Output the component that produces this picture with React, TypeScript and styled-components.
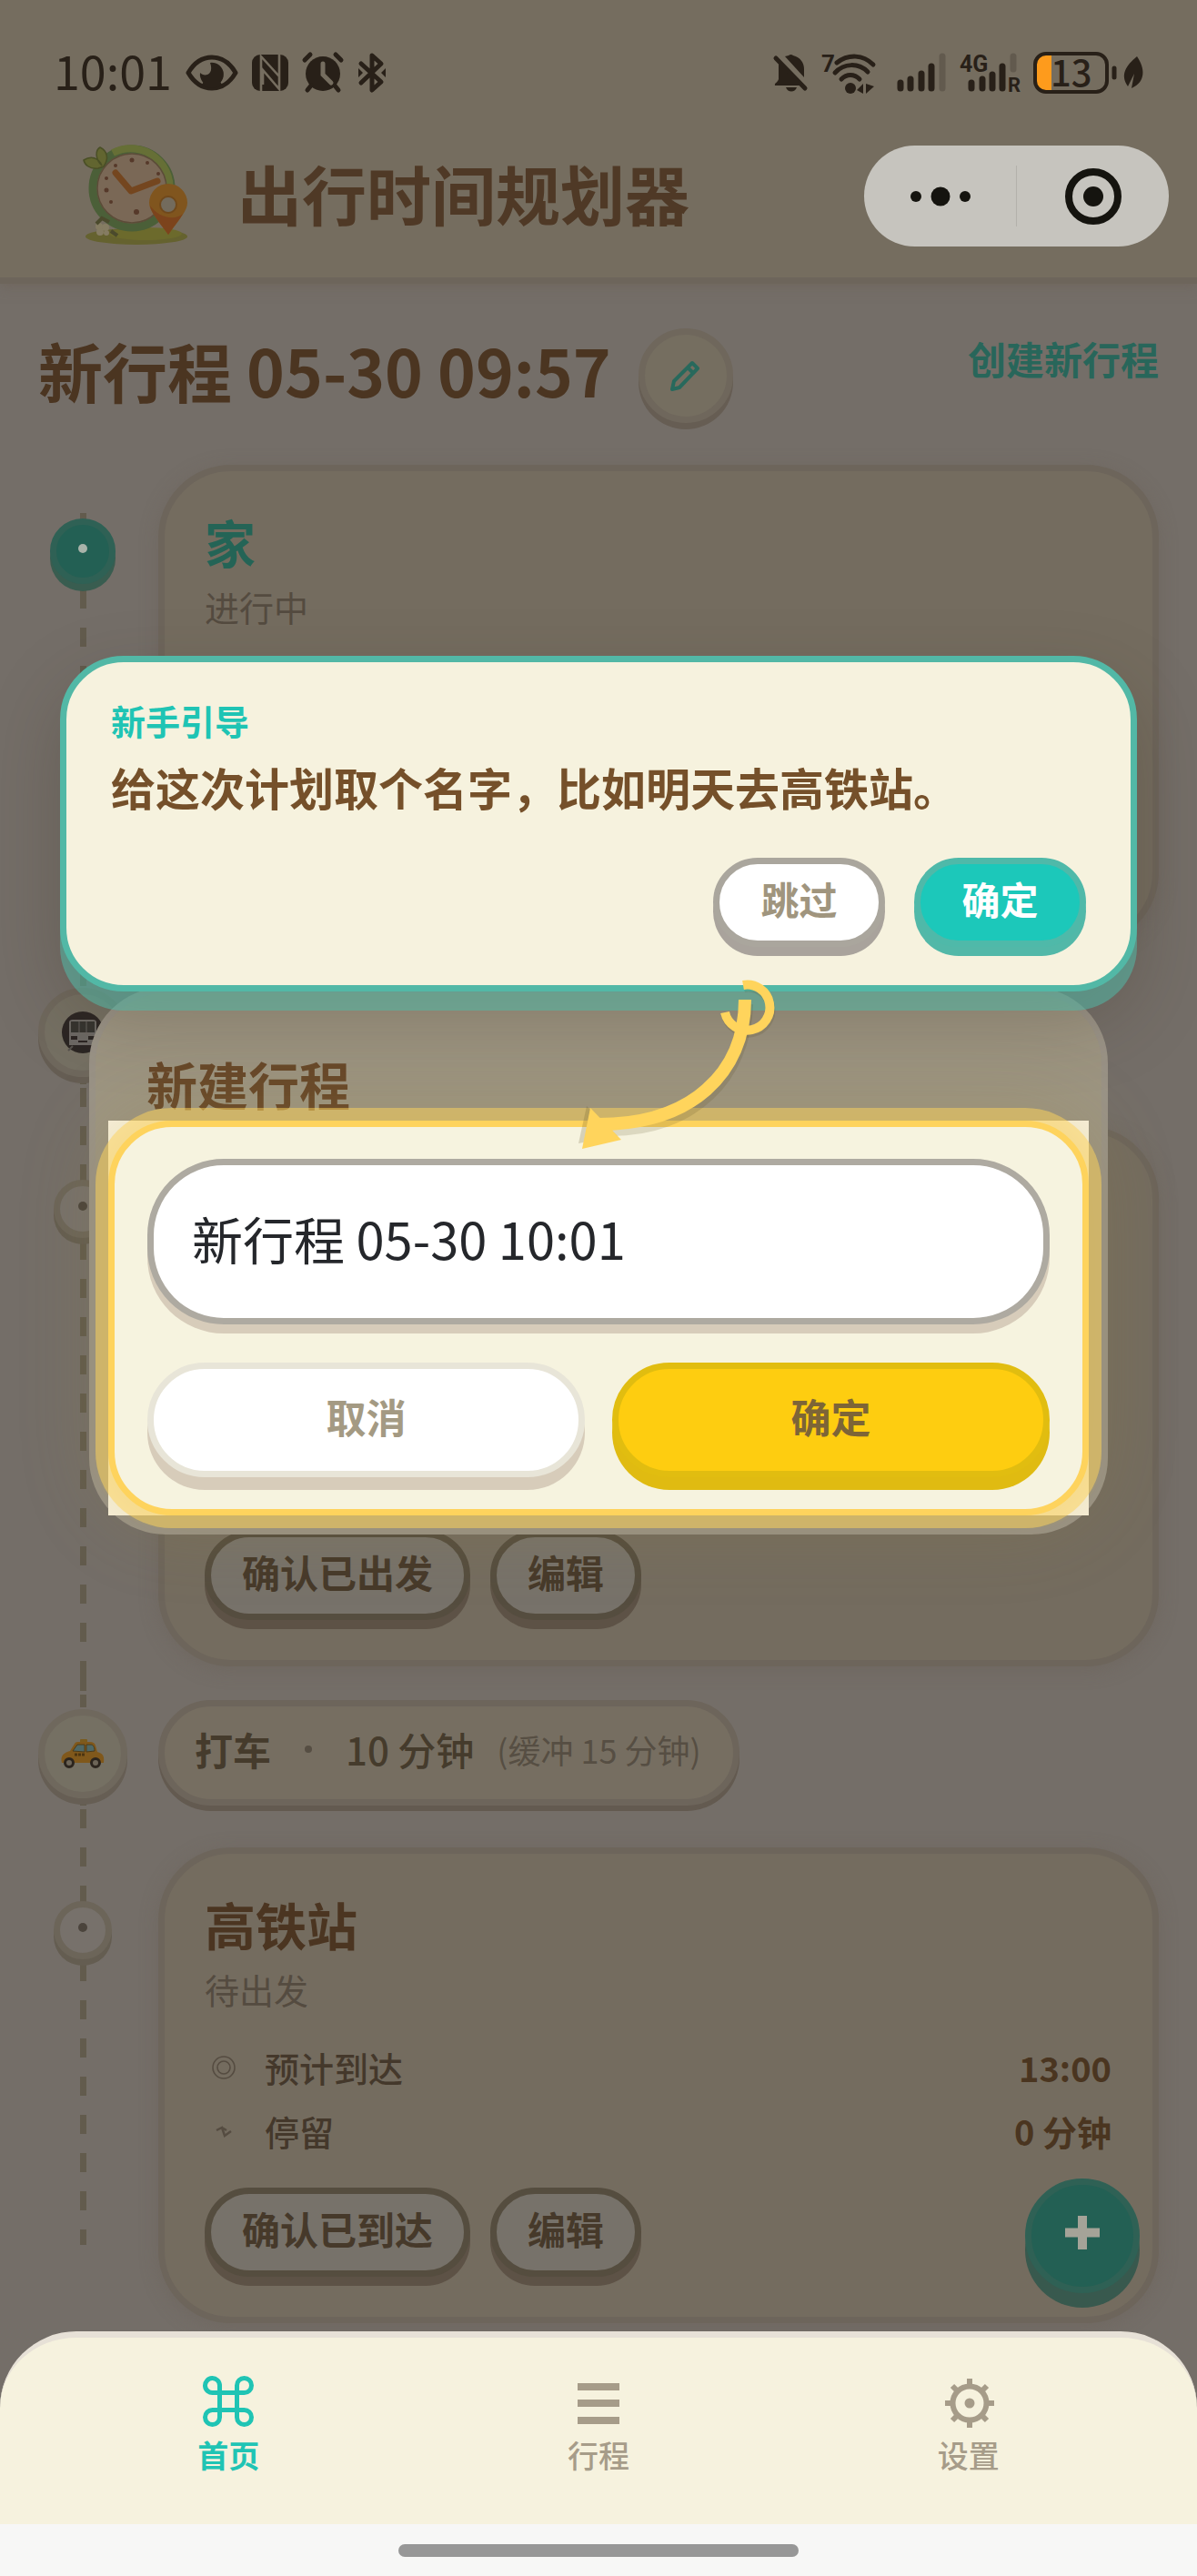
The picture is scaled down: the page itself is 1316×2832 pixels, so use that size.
import React, { useState } from 'react';
import styled, { createGlobalStyle, css } from 'styled-components';

const ink = '#282018';

const GlobalStyle = createGlobalStyle`
  * { box-sizing: border-box; }
  body {
    margin: 0;
    background: #746e68;
    font-family: 'Noto Sans CJK SC', 'Noto Sans', sans-serif;
    font-size: 38px;
  }
  h1, h2, h3, p, dl, dd, dt { margin: 0; font-weight: inherit; font-size: inherit; }
  button, input { font: inherit; margin: 0; padding: 0; border: 0; }
  svg { display: block; flex: none; overflow: visible; }
`;

const Screen = styled.div`
  position: relative;
  display: flex;
  flex-direction: column;
  min-height: 100vh;
  overflow: hidden;
  background: #746e68;
`;

/* ---------- header ---------- */

const Header = styled.header`
  border-bottom: 7px solid #6d655b;
  background: #756d5f;
  box-shadow: 0 4px 12px rgba(110, 98, 88, 0.6);
`;

const StatusBar = styled.div`
  display: flex;
  align-items: center;
  justify-content: space-between;
  height: 160px;
  padding: 0 59px;
  color: ${ink};
`;

const StatusGroup = styled.div<{ $gap: number }>`
  display: flex;
  align-items: center;
  gap: ${p => p.$gap}px;
`;

const Clock = styled.span`
  padding-bottom: 6px;
  font-size: 52px;
  line-height: 60px;
`;

const TitleBar = styled.div`
  display: flex;
  align-items: center;
  height: 145px;
  padding: 0 31px 34px 88px;
`;

const AppName = styled.h1`
  flex: 1;
  padding: 0 0 10px 53px;
  color: #4f3926;
  font-size: 71px;
  font-weight: 700;
  line-height: 96px;
`;

const Capsule = styled.div`
  display: flex;
  width: 335px;
  height: 111px;
  border-radius: 56px;
  background: #c6c4be;
`;

const CapsuleButton = styled.button`
  display: flex;
  flex: 1;
  align-items: center;
  justify-content: center;
  background: none;
`;

const CapsuleRule = styled.span`
  align-self: center;
  width: 1px;
  height: 67px;
  background: #b3b1ab;
`;

/* ---------- plan ---------- */

const Main = styled.main`
  flex: 1;
  padding: 49px 42px 0;
`;

const PlanHead = styled.div`
  display: flex;
  align-items: flex-start;
  height: 108px;
`;

const PlanName = styled.h2`
  color: #4b3521;
  font-size: 71px;
  font-weight: 700;
  line-height: 90px;
`;

const EditButton = styled.button`
  display: flex;
  align-items: center;
  justify-content: center;
  width: 104px;
  height: 104px;
  margin-left: 30px;
  border: 7px solid #6f675c;
  border-radius: 50%;
  background: #756e60;
  box-shadow: 0 7px 0 #665d53;
`;

const CreateLink = styled.a`
  margin-left: auto;
  color: #28665a;
  font-size: 42px;
  font-weight: 700;
  line-height: 66px;
  text-decoration: none;
`;

const Row = styled.section`
  display: flex;
  gap: 34px;
`;

const Rail = styled.div<{ $from?: number; $length?: string; $dense?: boolean }>`
  display: flex;
  flex: none;
  justify-content: center;
  width: 98px;
  background-image: ${p =>
    p.$dense
      ? 'repeating-linear-gradient(#625b4d 0 14px, transparent 14px 18px)'
      : 'repeating-linear-gradient(#625b4d 0 21px, transparent 21px 42px)'};
  background-repeat: no-repeat;
  background-position: 46px ${p => p.$from ?? 0}px;
  background-size: 7px ${p => p.$length ?? '100%'};
`;

const StopDot = styled.span<{ $active?: boolean }>`
  display: flex;
  align-items: center;
  justify-content: center;
  width: 64px;
  height: 64px;
  margin-top: 101px;
  border: 7px solid #6c6559;
  border-radius: 50%;
  background: #77716b;
  box-shadow: 0 7px 0 #645d51;
  &::after {
    width: 10px;
    height: 10px;
    margin-bottom: 7px;
    border-radius: 50%;
    background: #4b443c;
    content: '';
  }
  ${p =>
    p.$active &&
    css`
      width: 72px;
      height: 72px;
      border-color: #2f6155;
      background: #236054;
      box-shadow: 0 8px 0 #395d50;
      &::after { background: #a9b3aa; }
    `}
`;

const RideDot = styled.span`
  display: flex;
  align-items: center;
  justify-content: center;
  width: 98px;
  height: 98px;
  margin-top: 34px;
  border: 7px solid #6f685d;
  border-radius: 50%;
  background: #757063;
  box-shadow: 0 7px 0 #665e54;
`;

const StopBody = styled.div`
  flex: 1;
  padding: 42px 0 13px;
  ${Row}:last-child & { padding-bottom: 9px; }
`;

const Card = styled.article<{ $min?: number }>`
  display: flex;
  flex-direction: column;
  min-height: ${p => p.$min ?? 0}px;
  padding: 42px 44px 44px;
  border: 7px solid #6d655b;
  border-radius: 80px;
  background: #746c5f;
  box-shadow: 0 4px 20px rgba(105, 95, 86, 0.4);
`;

const StopName = styled.h3<{ $active?: boolean }>`
  color: ${p => (p.$active ? '#246456' : '#4b3521')};
  font-size: 56px;
  font-weight: 700;
  line-height: 70px;
`;

const StopState = styled.p`
  margin-top: 11px;
  color: #544b40;
  line-height: 52px;
`;

const Facts = styled.dl`
  display: grid;
  gap: 18px;
  margin-top: 34px;
`;

const Fact = styled.div`
  display: flex;
  align-items: center;
  padding: 0 1px 0 8px;
  line-height: 52px;
`;

const FactLabel = styled.dt`
  flex: 1;
  padding-left: 32px;
  color: #44382b;
  font-weight: 500;
`;

const FactValue = styled.dd`
  color: #4a3520;
  font-weight: 700;
`;

const CardActions = styled.div`
  display: flex;
  gap: 22px;
  margin-top: auto;
  ${Facts} + & { margin-top: 36px; }
`;

const CardButton = styled.button`
  height: 98px;
  padding: 0 34px 9px;
  border: 7px solid #554d3f;
  border-radius: 49px;
  background: #77726a;
  box-shadow: 0 10px 0 #5d5246;
  color: #46392a;
  font-size: 42px;
  font-weight: 700;
`;

const RideBody = styled.div`
  flex: 1;
  padding: 24px 0 4px;
`;

const RideSlot = styled.div`
  height: 116px;
`;

const Ride = styled.div`
  display: inline-flex;
  align-items: center;
  height: 116px;
  padding: 0 35px 9px 33px;
  border: 7px solid #6d655b;
  border-radius: 58px;
  background: #766e61;
  box-shadow: 0 6px 0 #635a50;
  color: #453b2c;
  font-size: 42px;
`;

const RideMode = styled.span`
  font-weight: 700;
`;

const RideSep = styled.span`
  width: 8px;
  height: 8px;
  margin: 0 37px;
  border-radius: 50%;
  background: #564e43;
`;

const RideTime = styled.span`
  font-weight: 500;
`;

const RideBuffer = styled.span`
  margin-left: 25px;
  color: #564e43;
  font-size: 36px;
`;

const AddButton = styled.button`
  position: absolute;
  right: 63px;
  bottom: 311px;
  display: flex;
  align-items: center;
  justify-content: center;
  width: 126px;
  height: 126px;
  border: 7px solid #2f6155;
  border-radius: 50%;
  background: #236054;
  box-shadow: 0 16px 0 #38594e;
`;

/* ---------- guide and dialog ---------- */

const Overlay = styled.div`
  position: absolute;
  inset: 0;
  padding: 721px 66px 0;
  pointer-events: none;
  & > * { pointer-events: auto; }
`;

const Guide = styled.aside`
  position: relative;
  z-index: 1;
  display: flex;
  flex-direction: column;
  padding: 40px 49px 42px;
  border: 7px solid #52b8a6;
  border-radius: 70px;
  background: #f6f2de;
  box-shadow: 0 21px 0 rgba(82, 184, 166, 0.55), 0 32px 80px rgba(60, 50, 35, 0.26);
`;

const GuideTag = styled.p`
  color: #1fc4b4;
  font-weight: 700;
  line-height: 48px;
`;

const GuideText = styled.p`
  margin-top: 12px;
  color: #75502a;
  font-size: 49px;
  font-weight: 700;
  line-height: 74px;
`;

const GuideActions = styled.div`
  display: flex;
  justify-content: flex-end;
  gap: 32px;
  margin-top: 41px;
`;

const GuideButton = styled.button<{ $primary?: boolean }>`
  width: 189px;
  height: 98px;
  padding-bottom: 9px;
  border: 7px solid ${p => (p.$primary ? '#4fb9a9' : '#aaa69d')};
  border-radius: 49px;
  background: ${p => (p.$primary ? '#1cc8ba' : '#ffffff')};
  box-shadow: 0 10px 0 ${p => (p.$primary ? '#52b8a8' : '#a9a39c')};
  color: ${p => (p.$primary ? '#ffffff' : '#a0957e')};
  font-size: 42px;
  font-weight: 700;
`;

const Dialog = styled.form`
  margin: -5px 32px 0;
  padding: 14px;
  border: 7px solid #9a9387;
  border-radius: 84px;
  background: #9d9582;
`;

const DialogTitle = styled.h2`
  padding: 50px 42px 6px;
  color: #68482a;
  font-size: 56px;
  font-weight: 700;
  line-height: 70px;
`;

const Spotlight = styled.div`
  display: grid;
  background: #fbf3dc;
`;

const SpotlightFrame = styled.div`
  display: flex;
  flex-direction: column;
  gap: 42px;
  padding: 35px 36px;
  border: 7px solid #fed35d;
  border-radius: 70px;
  background: #f6f3df;
  box-shadow: 0 0 0 14px rgba(253, 211, 92, 0.52), 0 0 84px 14px rgba(150, 130, 60, 0.22);
`;

const NameInput = styled.input`
  width: 100%;
  height: 182px;
  padding: 0 42px 9px;
  border: 7px solid #aeaaa1;
  border-radius: 84px;
  outline: none;
  background: #ffffff;
  box-shadow: 0 10px 0 #d7ccba;
  color: #25272b;
  font-size: 56px;
`;

const DialogActions = styled.div`
  display: flex;
  gap: 30px;
`;

const DialogButton = styled.button<{ $primary?: boolean }>`
  flex: 1;
  height: 126px;
  padding-bottom: 9px;
  border: 7px solid ${p => (p.$primary ? '#e1bd10' : '#e8e5d8')};
  border-radius: 63px;
  background: ${p => (p.$primary ? '#fecd10' : '#ffffff')};
  box-shadow: 0 14px 0 ${p => (p.$primary ? '#e0bb11' : '#d7ccba')};
  color: ${p => (p.$primary ? '#7d6537' : '#a49a83')};
  font-size: 44px;
  font-weight: 700;
`;

const Pointer = styled.svg`
  position: absolute;
  z-index: 2;
  top: 1060px;
  left: calc(50% - 58px);
  pointer-events: none;
`;

/* ---------- tab bar ---------- */

const TabBar = styled.nav`
  display: flex;
  padding: 42px 48px 55px;
  border-top: 7px solid #e7e1d7;
  border-radius: 84px 84px 0 0;
  background: #f6f2de;
`;

const Tab = styled.a<{ $active?: boolean }>`
  display: flex;
  flex: 1;
  flex-direction: column;
  align-items: center;
  gap: 10px;
  color: ${p => (p.$active ? '#1fc4b4' : '#a69c89')};
  font-size: 34px;
  font-weight: ${p => (p.$active ? 700 : 500)};
  line-height: 42px;
  text-decoration: none;
`;

const HomeStrip = styled.div`
  display: flex;
  align-items: center;
  justify-content: center;
  height: 57px;
  background: #f7f7f6;
  &::after {
    width: 33.4%;
    height: 14px;
    border-radius: 7px;
    background: #979797;
    content: '';
  }
`;

/* ---------- drawings ---------- */

const EyeIcon = () => (
  <svg width="58" height="40" viewBox="0 0 58 40" fill="none">
    <path d="M3 20C10 8 19 3 29 3s19 5 26 17c-7 12-16 17-26 17S10 32 3 20Z" stroke={ink} strokeWidth="5" strokeLinejoin="round" />
    <path d="M27 9a13 13 0 1 1-11 11c4 5 16 3 11-11Z" fill={ink} />
    <path d="M18 33c7 5 15 5 22 0l-3-5H21Z" fill={ink} />
  </svg>
);

const NfcIcon = () => (
  <svg width="40" height="40" viewBox="0 0 40 40">
    <rect width="40" height="40" rx="9" fill={ink} />
    <path d="M10 40V2l20 22V9M30 0v38L12 17v16" stroke="#756d5f" strokeWidth="2.6" fill="none" />
  </svg>
);

const AlarmIcon = () => (
  <svg width="46" height="44" viewBox="0 0 46 44" fill="none" stroke={ink} strokeLinecap="round">
    <circle cx="23" cy="23" r="19" fill={ink} stroke="none" />
    <path d="M3 8l6-6M43 8l-6-6M10 36l-4 5M36 36l4 5" strokeWidth="5" />
    <path d="M23 12v12l9 9" stroke="#756d5f" strokeWidth="5" />
  </svg>
);

const BluetoothIcon = () => (
  <svg width="32" height="44" viewBox="0 0 32 44" fill="none" stroke={ink} strokeWidth="5" strokeLinejoin="round" strokeLinecap="round">
    <path d="M4 12l22 20-10 9V3l10 9L4 33" />
    <path d="M1 17v10l5-5ZM31 17v10l-5-5Z" fill={ink} stroke="none" />
  </svg>
);

const MutedBellIcon = () => (
  <svg width="38" height="44" viewBox="0 0 38 44">
    <path d="M13 4l4-1a4 4 0 0 1 5 0c8 2 12 8 12 15v9ZM6 12l24 24H2c-1-3 3-3 4-7Z" fill={ink} />
    <path d="M3 6l32 33" stroke={ink} strokeWidth="5" strokeLinecap="round" />
    <path d="M14 38h12c-2 6-10 6-12 0Z" fill={ink} />
  </svg>
);

const WifiIcon = () => (
  <svg width="68" height="48" viewBox="0 0 68 48" fill="none" stroke={ink} strokeWidth="5" strokeLinecap="round">
    <text x="0" y="23" fontSize="26" fontWeight="700" fontFamily="Roboto, sans-serif" fill={ink} stroke="none">7</text>
    <path d="M17 13c13-10 29-9 40 2M15 24c10-11 26-11 36-1M22 31c6-6 14-6 20 0" />
    <circle cx="32" cy="41" r="6" fill={ink} stroke="none" />
    <path d="M46 36v11l-7-4ZM49 36v11l9-8Z" fill={ink} stroke="none" />
  </svg>
);

const SignalIcon = () => (
  <svg width="54" height="44" viewBox="0 0 54 44" stroke={ink} strokeWidth="7" strokeLinecap="round">
    <path d="M4 33v6M15 29v10M27 23v16M38 15v24" />
    <path d="M50 4v35" stroke="#625a4e" />
  </svg>
);

const CellularIcon = () => (
  <svg width="66" height="44" viewBox="0 0 66 44" stroke={ink} strokeWidth="7" strokeLinecap="round">
    <path d="M13 33v6M25 29v10M36 24v15M47 15v24" />
    <path d="M59 4v14" stroke="#625a4e" />
    <g fill={ink} stroke="none" fontFamily="Roboto, sans-serif" fontWeight="700">
      <text x="0" y="21" fontSize="25">4G</text>
      <text x="53" y="43" fontSize="22">R</text>
    </g>
  </svg>
);

const BatteryIcon = () => (
  <svg width="92" height="46" viewBox="0 0 92 46">
    <path d="M12 3h8v40h-8a9 9 0 0 1-9-9V12a9 9 0 0 1 9-9Z" fill="#fe9b1c" />
    <rect x="2" y="2" width="79" height="42" rx="12" fill="none" stroke={ink} strokeWidth="4" />
    <path d="M89 18v10" stroke={ink} strokeWidth="5" strokeLinecap="round" />
    <text x="19" y="38" fontSize="40" fontWeight="500" fontFamily="'Noto Sans CJK SC', sans-serif" fill={ink}>13</text>
  </svg>
);

const LeafIcon = () => (
  <svg width="22" height="36" viewBox="0 0 22 36">
    <path d="M15 0c9 13 10 28-6 35l3-16-7 14C-4 20 3 10 15 0Z" fill={ink} />
  </svg>
);

const ClockLogo = () => (
  <svg width="120" height="112" viewBox="0 0 120 112" fill="none">
    <ellipse cx="62" cy="100" rx="56" ry="9" fill="#65622f" />
    <ellipse cx="72" cy="97" rx="40" ry="7" fill="#6c6a2c" />
    <circle cx="57" cy="47" r="43" fill="#7a6856" stroke="#4b5f38" strokeWidth="9" />
    <path d="M36 8a43 43 0 0 1 61 50" stroke="#666f36" strokeWidth="8" />
    <circle cx="57" cy="47" r="38" stroke="#5c4c38" strokeWidth="1.5" />
    <path d="M20 25C10 26 5 21 4 16c8-5 16-3 20 6C16 14 17 5 22 2c8 4 10 12 4 21Z" fill="#626530" stroke="#4a4f26" strokeWidth="1.5" />
    <g fill="#56392a">
      <circle cx="57" cy="16" r="2.5" />
      <circle cx="74" cy="19" r="2" />
      <circle cx="86" cy="31" r="2" />
      <circle cx="39" cy="22" r="2" />
      <circle cx="29" cy="36" r="2" />
      <circle cx="29" cy="49" r="2.5" />
      <circle cx="34" cy="62" r="2" />
      <circle cx="62" cy="73" r="3" />
    </g>
    <path d="M39 30l17 20 29-11" stroke="#74461f" strokeWidth="7" strokeLinecap="round" strokeLinejoin="round" />
    <path d="M97 98C85 81 76 72 76 63a21 21 0 0 1 42 0c0 9-9 18-21 35Z" fill="#80551e" />
    <path d="M97 98C87 84 78 74 77 66c8 12 26 18 36 9-4 7-10 14-16 23Z" fill="#7c431c" />
    <circle cx="97" cy="65" r="9" fill="#736b5d" stroke="#70491c" strokeWidth="2" />
    <g fill="#857c62">
      <circle cx="21" cy="89" r="4" />
      <circle cx="28" cy="90" r="4" />
      <circle cx="22" cy="95" r="4" />
      <circle cx="29" cy="96" r="3" />
    </g>
    <path d="M18 86l6-6 8 4M34 94l7 5" stroke="#4b4a2c" strokeWidth="4" />
  </svg>
);

const DotsIcon = () => (
  <svg width="66" height="22" viewBox="0 0 66 22" fill="#15140f">
    <circle cx="6" cy="11" r="6" />
    <circle cx="33" cy="11" r="10.5" />
    <circle cx="60" cy="11" r="6" />
  </svg>
);

const TargetIcon = () => (
  <svg width="62" height="62" viewBox="0 0 62 62">
    <circle cx="31" cy="31" r="27" fill="none" stroke="#15140f" strokeWidth="8" />
    <circle cx="31" cy="31" r="11" fill="#15140f" />
  </svg>
);

const PencilIcon = () => (
  <svg width="36" height="36" viewBox="0 0 36 36" fill="none" stroke="#28695c" strokeWidth="4" strokeLinejoin="round">
    <path d="M3 33l2-9L25 4l6 6-20 21ZM20 9l6 6" />
  </svg>
);

const BusIcon = () => (
  <svg width="50" height="46" viewBox="0 0 50 46">
    <circle cx="25" cy="23" r="23" fill="#2b2523" />
    <path d="M10 12q0-3 4-3h22q4 0 4 3v25H10Z" fill="#6c6864" />
    <path d="M12 11h26v12H12Z" fill="#35332f" />
    <path d="M21 11v12M29 11v12" stroke="#4d4a46" strokeWidth="2" />
    <path d="M12 27h7v4h-7ZM31 27h7v4h-7ZM20 32h10v2H20Z" fill="#2b2523" />
    <path d="M14 38l-5 5M36 38l5 5" stroke="#55514d" strokeWidth="2" />
  </svg>
);

const TaxiIcon = () => (
  <svg width="50" height="34" viewBox="0 0 50 34">
    <rect x="22" y="1" width="8" height="4" rx="1" fill="#7a5b1e" />
    <path d="M2 27c-2-8 2-11 9-13l5-8c1-2 3-2 5-2h12c3 0 5 1 6 4l2 7c6 2 8 4 7 12Z" fill="#80581b" />
    <path d="M14 14l5-7h8v8ZM29 7h5c2 0 4 2 4 7l-9 1Z" fill="#4f6866" stroke="#4c3a18" />
    <path d="M16 18h12" stroke="#4c3410" strokeWidth="3" strokeDasharray="3 1" />
    <g fill="#6d6558" stroke="#2b241d" strokeWidth="3">
      <circle cx="10" cy="27" r="4.5" />
      <circle cx="39" cy="27" r="4.5" />
    </g>
  </svg>
);

const RingIcon = () => (
  <svg width="26" height="26" viewBox="0 0 26 26" fill="none" stroke="#554c41" strokeWidth="1.6">
    <circle cx="13" cy="13" r="12" />
    <circle cx="13" cy="13" r="7" />
  </svg>
);

const BoltIcon = () => (
  <svg width="26" height="26" viewBox="0 0 26 26" fill="none" stroke="#554c41" strokeWidth="2.5">
    <path d="M5 12l6-3 3 9 7-5M11 9l5 3" />
  </svg>
);

const PlusIcon = () => (
  <svg width="38" height="44" viewBox="0 0 38 44" stroke="#a5a398" strokeWidth="10">
    <path d="M19 0v37M0 18.500h38" />
  </svg>
);

const CommandIcon = () => (
  <svg width="56" height="56" viewBox="0 0 56 56" fill="none" stroke="currentColor" strokeWidth="5">
    <path d="M18.500 37.500v-28M18.500 37.500h19v-19h-19M18.500 18.500h-7a8 8 0 1 1 7-8v8M37.500 18.500v-8a8 8 0 1 1 8 8h-8M37.500 37.500h8a8 8 0 1 1-8 8v-8M18.500 37.500v8a8 8 0 1 1-8-8h8" />
  </svg>
);

const ListIcon = () => (
  <svg width="56" height="56" viewBox="0 0 56 56" stroke="currentColor" strokeWidth="8">
    <path d="M5 12h46M5 30h46M5 49h46" />
  </svg>
);

const GearIcon = () => (
  <svg width="56" height="56" viewBox="0 0 56 56" fill="none" stroke="currentColor">
    <circle cx="29" cy="30" r="18.500" strokeWidth="6" />
    <circle cx="29" cy="30" r="5.500" fill="currentColor" stroke="none" />
    <path d="M29 3v8M29 49v8M2 30h8M48 30h8M10 11l6 6M42 43l6 6M10 49l6-6M42 17l6-6" strokeWidth="6" />
  </svg>
);

const GuideArrow = () => (
  <Pointer width="280" height="220" viewBox="0 0 280 220" fill="none" aria-hidden="true">
    <g stroke="#5a4a20" strokeOpacity="0.16">
      <path d="M221 44C219 126 160 182 72 182" strokeWidth="14" />
      <path d="M218 26a25 25 0 1 1-20 30" strokeWidth="10" />
    </g>
    <path d="M45 156l-9 41 43-8Z" fill="#5a4a20" fillOpacity="0.2" />
    <g stroke="#ffd45c">
      <path d="M219 39C219 120 160 176 58 176" strokeWidth="14" />
      <path d="M217 23a25 25 0 1 1-20 30" strokeWidth="10" />
    </g>
    <path d="M49 158l-9 45 43-10Z" fill="#ffd45c" />
  </Pointer>
);

/* ---------- app ---------- */

export default function App() {
  const [name, setName] = useState('新行程 05-30 10:01');

  return (
    <Screen>
      <GlobalStyle />
      <Header>
        <StatusBar>
          <StatusGroup $gap={15}>
            <Clock>10:01</Clock>
            <EyeIcon />
            <NfcIcon />
            <AlarmIcon />
            <BluetoothIcon />
          </StatusGroup>
          <StatusGroup $gap={15}>
            <MutedBellIcon />
            <WifiIcon />
            <SignalIcon />
            <CellularIcon />
            <StatusGroup $gap={7}>
              <BatteryIcon />
              <LeafIcon />
            </StatusGroup>
          </StatusGroup>
        </StatusBar>
        <TitleBar>
          <ClockLogo />
          <AppName>出行时间规划器</AppName>
          <Capsule>
            <CapsuleButton type="button" aria-label="更多"><DotsIcon /></CapsuleButton>
            <CapsuleRule />
            <CapsuleButton type="button" aria-label="关闭"><TargetIcon /></CapsuleButton>
          </Capsule>
        </TitleBar>
      </Header>

      <Main>
        <PlanHead>
          <PlanName>新行程 05-30 09:57</PlanName>
          <EditButton type="button" aria-label="编辑名称"><PencilIcon /></EditButton>
          <CreateLink href="#new">创建新行程</CreateLink>
        </PlanHead>

        <div>
          <Row>
            <Rail $from={95}><StopDot $active /></Rail>
            <StopBody>
              <Card $min={528}>
                <StopName $active>家</StopName>
                <StopState>进行中</StopState>
              </Card>
            </StopBody>
          </Row>
          <Row>
            <Rail $dense><RideDot><BusIcon /></RideDot></Rail>
            <RideBody><RideSlot /></RideBody>
          </Row>
          <Row>
            <Rail><StopDot /></Rail>
            <StopBody>
              <Card $min={594}>
                <CardActions>
                  <CardButton type="button">确认已出发</CardButton>
                  <CardButton type="button">编辑</CardButton>
                </CardActions>
              </Card>
            </StopBody>
          </Row>
          <Row>
            <Rail $dense><RideDot><TaxiIcon /></RideDot></Rail>
            <RideBody>
              <Ride>
                <RideMode>打车</RideMode>
                <RideSep />
                <RideTime>10 分钟</RideTime>
                <RideBuffer>(缓冲 15 分钟)</RideBuffer>
              </Ride>
            </RideBody>
          </Row>
          <Row>
            <Rail $length="479px"><StopDot /></Rail>
            <StopBody>
              <Card>
                <StopName>高铁站</StopName>
                <StopState>待出发</StopState>
                <Facts>
                  <Fact>
                    <RingIcon />
                    <FactLabel>预计到达</FactLabel>
                    <FactValue>13:00</FactValue>
                  </Fact>
                  <Fact>
                    <BoltIcon />
                    <FactLabel>停留</FactLabel>
                    <FactValue>0 分钟</FactValue>
                  </Fact>
                </Facts>
                <CardActions>
                  <CardButton type="button">确认已到达</CardButton>
                  <CardButton type="button">编辑</CardButton>
                </CardActions>
              </Card>
            </StopBody>
          </Row>
        </div>
      </Main>

      <TabBar>
        <Tab href="#home" $active aria-current="page"><CommandIcon />首页</Tab>
        <Tab href="#trips"><ListIcon />行程</Tab>
        <Tab href="#settings"><GearIcon />设置</Tab>
      </TabBar>
      <HomeStrip />

      <AddButton type="button" aria-label="添加"><PlusIcon /></AddButton>

      <Overlay>
        <Guide>
          <GuideTag>新手引导</GuideTag>
          <GuideText>给这次计划取个名字，比如明天去高铁站。</GuideText>
          <GuideActions>
            <GuideButton type="button">跳过</GuideButton>
            <GuideButton type="button" $primary>确定</GuideButton>
          </GuideActions>
        </Guide>
        <Dialog role="dialog" aria-labelledby="dialog-title" onSubmit={e => e.preventDefault()}>
          <DialogTitle id="dialog-title">新建行程</DialogTitle>
          <Spotlight>
            <SpotlightFrame>
              <NameInput aria-labelledby="dialog-title" value={name} onChange={e => setName(e.target.value)} />
              <DialogActions>
                <DialogButton type="button">取消</DialogButton>
                <DialogButton type="submit" $primary>确定</DialogButton>
              </DialogActions>
            </SpotlightFrame>
          </Spotlight>
        </Dialog>
      </Overlay>
      <GuideArrow />
    </Screen>
  );
}
